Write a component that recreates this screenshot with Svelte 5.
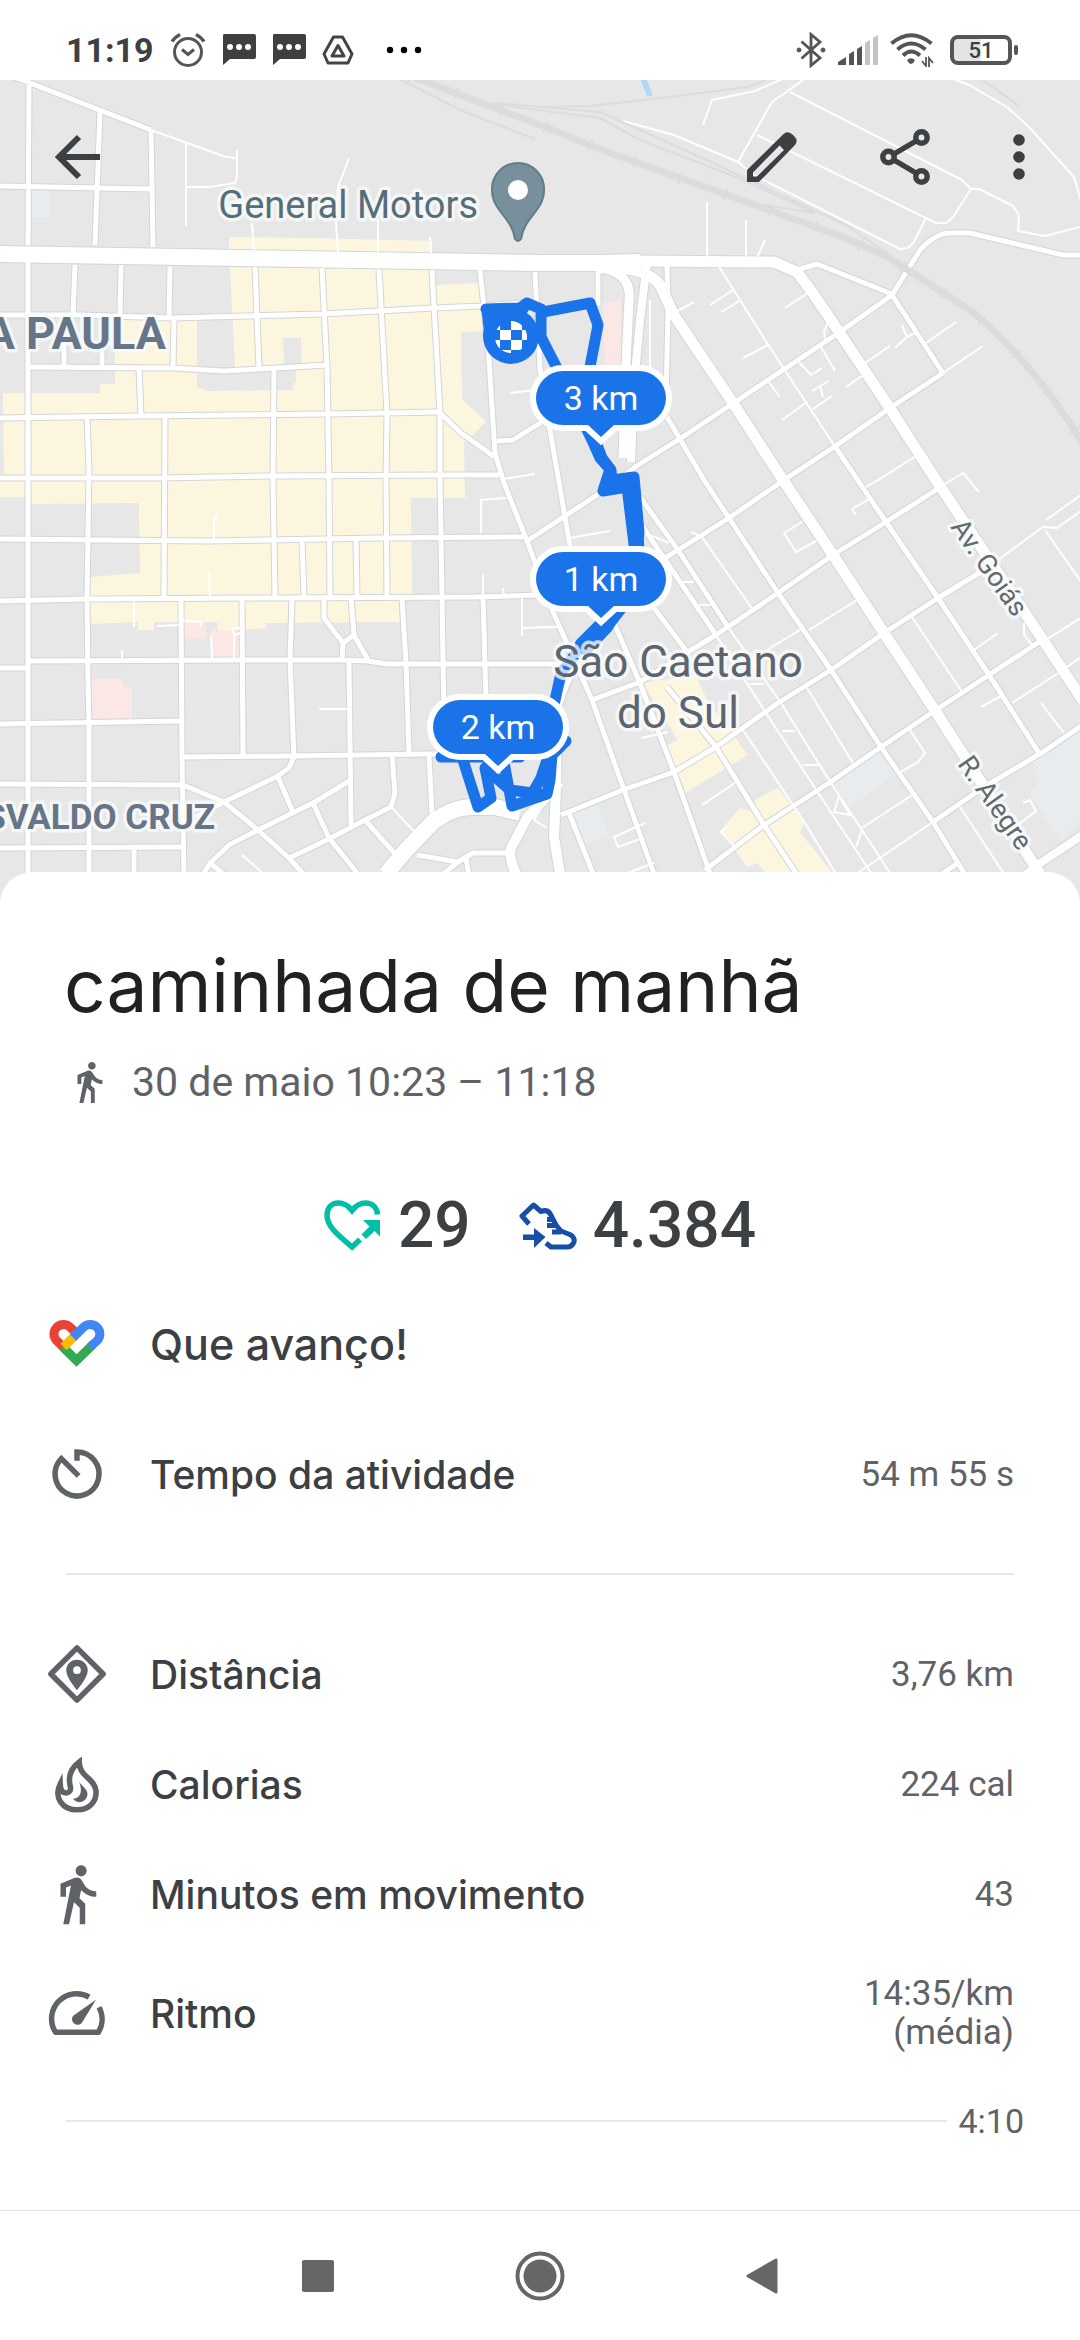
<script lang="ts">
	const wideRoads = [
		{ w: 16, d: 'M0 254 L540 263 L600 263 L640 262' },
		{ w: 11, d: 'M636 261 L774 262 L797 272 L812 292 L833 323 L891 410 L936 480 L1043 640 L1084 702' },
		{ w: 11, d: 'M600 268 Q645 266 660 285 L674 315 L733 403 L781 477 L833 555 L884 633 L936 712 L1040 874' },
		{ w: 8, d: 'M647 263 L640 320 L634 385 L631 462' },
		{ w: 9, d: 'M606 269 Q632 276 629 300 L626 363 L623 458' },
		{ w: 16, d: 'M386 874 L406 850 L434 821 Q452 808 470 807 L495 807 L520 813' },
		{ w: 10, d: 'M557 700 L556 790 L554 837 L561 880 M560 782 L527 818 L511 848 Q508 857 517 876' },
		{ w: 8, d: 'M1084 834 L1036 866 L1024 876' }
	];

	const roads = [
		'M12 76 L151 130',
		'M29 85 L28 245 M100 112 L95 245 M151 130 L153 247',
		'M0 186 L152 189',
		'M28 262 L28 876',
		'M75 265 L73 315 M121 265 L120 315 M170 267 L169 318 M174 320 L173 367',
		'M0 315 L80 315 L172 318 L322 314 L434 308 L482 306 L535 302',
		'M28 367 L172 368 L224 371 L327 365',
		'M64 340 V367 M102 340 V367 M139 370 L141 415',
		'M255 267 L259 367 M322 268 L327 367 L329 480 L330 597',
		'M379 270 L387 413 L386 480 L387 597',
		'M432 270 L440 413 L440 480 L442 597 L444 720',
		'M480 270 L484 307 L489 360 L495 453 L504 483 L527 541 L553 612 L592 700 L623 787 L654 874',
		'M440 413 L461 433 L485 450 L494 457 M497 441 L513 440 L545 420',
		'M0 418 L141 416 L327 414 L440 412',
		'M0 478 L160 478 L275 476 L440 475 L499 475',
		'M0 539 L207 541 L379 538 L523 537',
		'M0 601 L86 599 L275 598 L475 597 L540 595',
		'M29 661 L241 660 L341 660 L368 661 L387 664 L565 664',
		'M0 668 H29 M0 724 L181 721 M0 848 L185 847 M134 848 V876',
		'M0 784 L183 785 L224 802 L258 830 L289 858 L305 876',
		'M183 757 L293 756 L427 754 L460 754',
		'M274 370 L273 480 L275 597 M87 418 L89 470 L87 597 L88 683 L89 723 L89 876 M165 417 L164 597',
		'M181 600 L182 757 L184 876 M242 600 L243 755 M292 600 L290 660 L294 757 L289 768 L276 777 L224 802 L196 817',
		'M302 540 L304 597 M356 540 L357 597 M324 600 V618 L343 643 L342 660 M351 598 L354 635 L343 643 M354 635 L368 660',
		'M402 598 L406 663 L409 753 M483 597 L486 700 L475 712 M349 662 L351 825',
		'M392 755 L395 793 L391 807 L365 820 L327 840 L289 858 M429 755 L432 813',
		'M351 780 L313 803 L258 830 L229 845 L210 863 L202 876 M278 777 L293 812 M313 803 L329 838 L358 874 M365 820 L396 855 M210 863 L226 876',
		'M417 855 L458 862 L473 853 L507 853 M458 862 L443 874 M466 858 L469 876',
		'M892 295 L840 332 L735 402 L678 440 L638 465 L600 493 L527 541',
		'M943 373 L890 408 L834 447 L784 480 L729 518 L678 550 L655 564',
		'M939 488 L886 522 L833 555 L778 593 L716 635 L688 652 L640 682 L592 700',
		'M984 570 L938 598 L884 633 L831 670 L778 703 L716 747 L674 772 L623 790 L561 815',
		'M1039 642 L989 675 L936 710 L881 747 L829 783 L764 825 L705 870',
		'M1084 724 L1043 752 L984 787 L933 822',
		'M958 863 L942 874',
		'M892 295 L943 373',
		'M834 445 L886 522 L938 598 L989 675 L1039 753',
		'M667 417 L704 480 L729 518 L778 593 L831 670 L881 747 L933 822 L966 876',
		'M640 497 L678 550 L728 627 M643 527 L716 635',
		'M667 687 L716 747 L764 825 L798 876 M654 608 L688 653',
		'M614 623 L640 683 L674 772 L711 876 M569 813 L594 876',
		'M667 265 L668 310 L666 400 M598 270 V305',
		'M535 272 L538 330 L540 369 L550 430 L570 546 M614 620 Q570 664 560 705',
		'M892 295 L920 250 Q936 233 950 233 L970 233 L1063 255 L1084 255 M797 270 L817 264 L892 294'
	];

	const lanes = [
		'M151 130 L226 157 L237 158 M186 143 V226 M186 187 L210 187 L235 183 L237 177 V150',
		'M349 158 L338 187 L336 223 L338 252 M252 223 L254 250 M378 220 V252 M430 237 L431 253',
		'M623 121 L674 135 L738 162 L754 175 L900 249 L908 248 L914 242 L926 218',
		'M738 162 L772 102 L806 78 M790 92 L962 180 L971 189 L953 217 L946 223 L936 223 L757 135',
		'M971 189 H979 L1013 206 L1019 215 L1018 231 L1045 236 L1084 226',
		'M950 78 L969 85 L1007 107 L1029 127 L1074 177 L1082 204 M703 125 L712 100 L755 91 L785 78',
		'M707 202 V257 M746 220 V257 M765 240 L757 258 M718 265 L767 343 L834 445',
		'M674 313 L694 302 M710 305 L733 290 M721 312 L741 300 M785 308 L808 293 M743 358 L768 345',
		'M865 363 L890 346 M926 343 L956 322 M943 373 L983 346 M846 387 L862 376 M768 381 L780 397',
		'M799 362 L811 375 L822 368 M821 347 L835 371 M782 420 L807 402 M813 409 L832 396 M812 391 L829 381 M820 386 L823 397',
		'M902 325 L907 337 L895 348 M907 337 L915 333 M828 322 L824 332 L826 343 M878 480 L916 456',
		'M940 487 L963 473 L979 492 M866 487 L895 470 M856 515 L852 509 L869 499',
		'M802 522 L784 533 L796 552 L816 541 M691 532 L702 537 L753 610 M643 532 L669 543',
		'M682 582 H694 M699 605 H711 M750 684 H764 M782 731 H795 M803 765 H818',
		'M728 627 L781 703 L829 780 L862 830 L892 876 M716 635 L766 713 L815 788 L873 876',
		'M809 630 L857 600 M767 650 L803 628 M912 617 L962 692 M974 650 L998 633',
		'M1024 623 V635 L1032 645 M981 707 L1001 696 M1012 703 L1060 672 L1084 655 M1041 643 L1084 616',
		'M998 560 L1043 527 L1057 528 L1084 509 M1046 520 L1084 493 M1045 530 L1084 586 M1041 703 L1064 733',
		'M910 730 L925 753 L918 762 L899 773 M807 688 L853 763 M743 730 L805 823 L836 874',
		'M839 796 L834 812 L850 815 L839 796 M862 830 L856 847 M862 828 L912 795 M933 822 L856 874',
		'M702 805 L735 783 M960 807 L1004 874 M1015 827 L1036 811 L1030 800 L1023 803',
		'M645 823 L614 837 L618 847 L643 838 M641 738 L668 732 M728 826 L721 832 L735 847 M654 863 L625 874',
		'M540 627 H557 M570 538 L610 531 M510 393 L535 390 M481 533 V500 L506 498 M503 479 L535 474',
		'M522 597 V636 M522 628 L556 627 M483 575 V597 M503 588 L504 597',
		'M214 540 V520 L218 513 M209 572 L210 597 M134 600 V627 M157 626 L180 625 M182 621 L201 622 V627',
		'M211 635 L212 658 M241 628 H232 L234 635 V658 M234 635 L241 633 M122 650 V660',
		'M242 855 L264 874 M391 807 L414 831 M319 709 H348 M540 810 L534 820 L547 828 M650 388 V300'
	];

	const rails = [
		'M398 78 L460 110 L535 139',
		'M540 107 L590 106 L670 97 L747 87 L772 78',
		'M410 78 L490 104 L600 118 L640 140 L736 177 L815 213 M495 103 L600 112 L700 157 L846 225 L890 255',
		'M980 78 L1019 106 M745 202 L815 213'
	];

	const mainRail = 'M410 76 L540 125 L602 150 L747 202 L843 237 L888 257 L974 313 Q1040 370 1084 446';

	const blocks = [
		'M229 237 L308 238 L432 241 V253 L229 250 Z',
		'M230 267 L436 270 V285 L480 283 L484 331 L461 332 L462 399 L486 422 L464 443 L465 498 L411 498 L412 597 L400 600 V622 L266 623 V628 L218 632 L217 622 L154 622 V630 H138 V622 L90 624 V577 L140 573 L139 503 L32 504 L31 497 H0 V480 H4 L3 393 H100 V384 H115 V320 H197 V387 L207 391 L293 390 V383 H296 V367 H235 Z',
		'M643 683 L695 675 L709 703 L748 755 L685 793 L661 748 L678 740 L667 723 Z',
		'M755 800 L778 788 L805 823 L800 832 L833 874 H767 L757 863 L747 867 L721 830 L740 808 L754 812 Z'
	];

	const places = [
		{ x: 601, y: 398, text: '3 km' },
		{ x: 601, y: 579, text: '1 km' },
		{ x: 498, y: 727, text: '2 km' }
	];

	const rows = [
		{ icon: 'distance', label: 'Distância', value: '3,76 km' },
		{ icon: 'fire', label: 'Calorias', value: '224 cal' },
		{ icon: 'walk', label: 'Minutos em movimento', value: '43' },
		{ icon: 'speed', label: 'Ritmo', value: '14:35/km (média)' }
	];
</script>

{#snippet icon(name: string)}
	<svg class="icon" viewBox="0 0 24 24" aria-hidden="true">
		{#if name === 'walk'}
			<path
				fill="currentColor"
				d="M13.5 5.5c1.1 0 2-.9 2-2s-.9-2-2-2-2 .9-2 2 .9 2 2 2zM9.8 8.9 7 23h2.1l1.8-8 2.1 2v6h2v-7.5l-2.1-2 .6-3C14.8 12 16.8 13 19 13v-2c-1.9 0-3.5-1-4.3-2.4l-1-1.6c-.4-.6-1-1-1.7-1-.3 0-.5.1-.8.1L6 8.3V13h2V9.6l1.8-.7"
			/>
		{:else if name === 'timer'}
			<path class="line" d="M12 7.2V4A8 8 0 1 1 6.3 6.4L12.6 12.7" />
		{:else if name === 'distance'}
			<path class="line" stroke-linejoin="round" d="M12 2.5 21.5 12 12 21.5 2.5 12Z" />
			<path
				fill="currentColor"
				fill-rule="evenodd"
				d="M12 6.8c-2.2 0-3.9 1.7-3.9 3.8 0 2.8 3.9 7.2 3.9 7.2s3.9-4.4 3.9-7.2c0-2.1-1.7-3.8-3.9-3.8zm0 2.4a1.4 1.4 0 1 1 0 2.8 1.4 1.4 0 0 1 0-2.8z"
			/>
		{:else if name === 'fire'}
			<path
				class="line"
				d="M12.8 4C9.6 6.4 8.7 9.6 9.6 13c.3 1.3-.5 2.3-1.6 2.3-1.3 0-2-1.2-2.1-3.3C3.4 17 6.8 21.4 12 21.4c4.7 0 7.3-3.3 6.9-7C18.4 9.8 12.8 9.4 12.8 4z"
			/>
			<path
				fill="currentColor"
				d="M12.6 10.5c.4 2 3.3 2.8 3.2 5.3-.1 1.8-1.6 2.8-3 2.8-1.1 0-1.8-.5-2.2-1.2 2.8-.4 3.6-2.6 2-6.9z"
			/>
		{:else if name === 'speed'}
			<path class="line" stroke-linejoin="round" d="M16.4 6.2A9.1 9.1 0 0 0 4.2 19H19.8A9.1 9.1 0 0 0 20 9.9" />
			<path fill="currentColor" d="M18.9 7.2 13.8 15.5a2 2 0 1 1-3.2-2.5z" />
		{/if}
	</svg>
{/snippet}

{#snippet chat()}
	<svg width="34" height="32" viewBox="0 0 34 32" aria-hidden="true">
		<path fill="#3f3f3f" d="M2 0h30q2 0 2 2v21q0 2-2 2H8l-7 6V2q0-2 1-2z" />
		<circle cx="8" cy="13" r="3" fill="#fff" />
		<circle cx="17" cy="13" r="3" fill="#fff" />
		<circle cx="26" cy="13" r="3" fill="#fff" />
	</svg>
{/snippet}

<div class="screen">
	<header class="status">
		<div class="status-side">
			<time>11:19</time>
			<svg width="36" height="36" viewBox="0 0 36 36" fill="none" stroke="#555" stroke-width="3" aria-hidden="true">
				<circle cx="18" cy="20" r="13.5" />
				<path d="M12 17.5l6 5 6-5" />
				<path stroke-width="3.5" d="M2 9.5Q5 5 10 2.5M34 9.5Q31 5 26 2.5" />
			</svg>
			{@render chat()}
			{@render chat()}
			<svg width="32" height="32" viewBox="0 0 32 32" fill="none" stroke="#444" stroke-width="3" stroke-linejoin="round" aria-hidden="true">
				<path d="M11.5 3h9L30 20l-4 9H6L2 20z" />
				<path d="M16 11.5L22 22H10z" />
			</svg>
			<svg class="more-notes" width="36" height="8" viewBox="0 0 36 8" aria-hidden="true">
				<circle cx="4" cy="4" r="3.2" />
				<circle cx="18" cy="4" r="3.2" />
				<circle cx="32" cy="4" r="3.2" />
			</svg>
		</div>
		<div class="status-side right">
			<svg width="30" height="36" viewBox="0 0 30 36" fill="none" stroke="#555" stroke-width="2.8" aria-hidden="true">
				<path d="M5.5 9.5L24 26 15 33.5V2.5L24 10 5.5 26.5" />
				<circle cx="3" cy="18" r="2" fill="#555" stroke-width="1" />
				<circle cx="27" cy="18" r="2" fill="#555" stroke-width="1" />
			</svg>
			<svg width="40" height="30" viewBox="0 0 40 30" aria-hidden="true">
				<path fill="#555" d="M0 30v-3l8-5v8zM11 30V19l5-3v14zM19 30V14l5-3v19z" />
				<path fill="#c4c4c4" d="M27 30V8l5-3v25zM35 30V3l5-3v30z" />
			</svg>
			<svg width="44" height="34" viewBox="0 0 44 34" fill="none" stroke="#555" stroke-width="4" aria-hidden="true">
				<path d="M1.5 10.5Q21 -6 41.5 10.5M7.5 16.5Q21 4.5 35.5 16.5M13 22.5Q21 14.5 30 22.5" />
				<path fill="#555" stroke="none" d="M17 27q4-3.5 8 0-1 3-4 4-3-1-4-4z" />
				<path stroke-width="1.8" d="M32 28l4 5V24M43 30l-4-5v9" />
			</svg>
			<div class="battery"><span>51</span></div>
		</div>
	</header>

	<section class="map">
		<svg class="map-canvas" viewBox="0 80 1080 824" preserveAspectRatio="xMidYMin slice" role="img" aria-label="Mapa do percurso">
			<rect y="80" width="1080" height="824" fill="#e7e7e7" />

			<g fill="#fdf6df">
				{#each blocks as d}
					<path {d} />
				{/each}
			</g>
			<path fill="#e7e7e7" d="M283 338H301L302 366H284Z" />
			<path
				fill="#fbe8e6"
				d="M603 303L621 300V366H605ZM91 679H123V687H132V719H91ZM184 622H206V639H184ZM211 629L240 632V658H213Z"
			/>
			<path
				fill="#e8ecef"
				d="M31 190H50V217H31ZM833 783L881 750 898 772 850 807ZM1031 763L1080 730V820L1061 842 1029 793 1040 783ZM572 812L598 805 609 835 586 845Z"
			/>
			<path stroke="#aed9fb" stroke-width="6" d="M643 78L650 96" />

			<g class="casing">
				{#each roads as d}
					<path {d} stroke-width="7" />
				{/each}
				{#each wideRoads as road}
					<path d={road.d} stroke-width={road.w + 2} />
				{/each}
			</g>
			<g class="road">
				{#each lanes as d}
					<path {d} stroke-width="2" />
				{/each}
				{#each roads as d}
					<path {d} stroke-width="5" />
				{/each}
				{#each wideRoads as road}
					<path d={road.d} stroke-width={road.w} />
				{/each}
			</g>
			<g class="rail">
				{#each rails as d}
					<path {d} stroke-width="2" />
				{/each}
				<path d={mainRail} stroke-width="7" />
				<path d={mainRail} stroke-width="12" stroke-dasharray="2 46" />
			</g>

			<g class="route">
				<path d="M486 309 L520 308 L527 303 L541 309 V337 L559 372 L592 440 L600 458 L610 469 L603 491 L627 487 L634 544 L636 590 L613 619 L580 648 L561 673 L554 705" />
				<path d="M543 312 L590 303 L598 325 L589 372 M592 432 L602 458 L611 470 L612 480 L634 477 L639 532 L635 560 M625 600 L607 628 L586 650" />
				<path stroke-width="15" d="M633 492 L637 550 M603 624 L582 645" />
				<path d="M566 741 L552 755 L550 780 L547 794 L512 806 L504 762 M552 745 L541 778 L532 794 M441 757 H520 M463 760 L478 807 L491 798 L485 768 L510 790 L540 794" />
			</g>
			<path fill="#1a73e8" d="M481 306L532 306 520 322 484 332Z" />
			<circle cx="511" cy="336" r="28" fill="#1a73e8" />
			<clipPath id="finish"><circle cx="511" cy="337" r="16" /></clipPath>
			<path
				clip-path="url(#finish)"
				fill="#fff"
				d="M489 320h11v10h-11zM511 320h11v10h-11zM500 330h11v10h-11zM522 330h11v10h-11zM489 340h11v10h-11zM511 340h11v10h-11zM500 350h11v10h-11zM522 350h11v10h-11z"
			/>

			<path
				fill="#78909c"
				stroke="#607d8b"
				stroke-width="2"
				d="M518 163a26 26 0 0 0-26 27c0 21 20 27 23 49q3 4 6 0c3-22 23-28 23-49a26 26 0 0 0-26-27z"
			/>
			<circle cx="518" cy="190" r="10" fill="#fff" />

			<g class="label">
				<text class="poi" x="478" y="218" text-anchor="end">General Motors</text>
				<text class="district large" x="166" y="349" text-anchor="end">A PAULA</text>
				<text class="district" x="215" y="829" text-anchor="end">SVALDO CRUZ</text>
				<text class="city" x="678" y="677" text-anchor="middle">São Caetano</text>
				<text class="city" x="678" y="728" text-anchor="middle">do Sul</text>
				<text class="street" transform="translate(950 527) rotate(55)">Av. Goiás</text>
				<text class="street" transform="translate(957 764) rotate(55)">R. Alegre</text>
			</g>

			{#each places as place}
				<g class="marker" transform="translate({place.x} {place.y})">
					<path d="M-38 -27H38A27 27 0 0 1 38 27H13L0 39L-13 27H-38A27 27 0 0 1 -38 -27Z" />
					<text y="12" text-anchor="middle">{place.text}</text>
				</g>
			{/each}
		</svg>

		<nav class="toolbar">
			<button aria-label="Voltar">
				<svg width="48" height="48" viewBox="0 0 48 48" fill="none" stroke="currentColor" stroke-width="6" aria-hidden="true">
					<path d="M47 24H8M26 4L6 24l20 20" />
				</svg>
			</button>
			<div class="actions">
				<button aria-label="Editar">
					<svg width="50" height="50" viewBox="0 0 50 50" aria-hidden="true">
						<path
							fill="currentColor"
							fill-rule="evenodd"
							d="M0 38L36 2.5Q41 -2 46 3l1.5 1.5Q52 9 47 14L12 50H0zM6 40.5V44.5H10L37 18 32.5 13.5z"
						/>
					</svg>
				</button>
				<button aria-label="Compartilhar">
					<svg width="50" height="56" viewBox="0 0 50 56" fill="none" stroke="currentColor" stroke-width="5.5" aria-hidden="true">
						<path d="M14 25L36 12M14 31L36 44" />
						<circle cx="8.5" cy="28" r="5.7" />
						<circle cx="41.5" cy="8.5" r="5.7" />
						<circle cx="41.5" cy="47.5" r="5.7" />
					</svg>
				</button>
				<button aria-label="Mais opções">
					<svg width="12" height="48" viewBox="0 0 12 48" fill="currentColor" aria-hidden="true">
						<circle cx="6" cy="7" r="5.8" />
						<circle cx="6" cy="24" r="5.8" />
						<circle cx="6" cy="41" r="5.8" />
					</svg>
				</button>
			</div>
		</nav>
	</section>

	<main class="sheet">
		<h1>caminhada de manhã</h1>
		<p class="when">
			{@render icon('walk')}
			<span>30 de maio 10:23 – 11:18</span>
		</p>

		<div class="metrics">
			<div class="metric">
				<svg width="58" height="52" viewBox="0 0 58 52" aria-hidden="true">
					<path
						fill="none"
						stroke="#00bfa5"
						stroke-width="5.5"
						d="M53.5 14.5C53 7 48 3 41.5 3 36 3 31.5 6 28 10.5 24.5 6 20 3 14.5 3 7.5 3 3 8 3 15.5c0 10 8.5 17.5 25 31.5l8-7.5"
					/>
					<path fill="#00bfa5" d="M39 20H56V36.5L50.5 31 42 39 37.5 34.5 45.5 26.5z" />
				</svg>
				<span>29</span>
			</div>
			<div class="metric">
				<svg width="58" height="52" viewBox="0 -2 58 52" aria-hidden="true">
					<path
						fill="none"
						stroke="#174ea6"
						stroke-width="5"
						stroke-linejoin="round"
						d="M10 22L3 14 14.5 3 22 9.5Q28 7 31 11.5L37 23 42 29 52 33Q56 36 55 40 53 45 48 45H32L27 41M28 17.5H35M28 23.5H38M33 30H42"
					/>
					<path fill="#174ea6" d="M4 32.5H15V26L26.5 35 15 46V38H4z" />
				</svg>
				<span>4.384</span>
			</div>
		</div>

		<div class="row tall praise">
			<svg class="icon" viewBox="-5 -9 66 66" fill="none" stroke-width="9" aria-hidden="true">
				<path stroke="#ea4335" d="M15 27.8L7.8 20.8A9.5 9.5 0 0 1 21.2 7.2L29 15" />
				<path stroke="#34a853" d="M14 27.2L27.5 40.5 44 24.5" />
				<path stroke="#fbbc04" d="M27 14.5L14.5 27" />
				<path stroke="#4285f4" d="M41 27L48 20.8A9.5 9.5 0 0 0 34.5 7.2L24 17.5" />
			</svg>
			<span class="name">Que avanço!</span>
		</div>
		<div class="row tall">
			{@render icon('timer')}
			<span class="name">Tempo da atividade</span>
			<span class="value">54 m 55 s</span>
		</div>

		<hr />

		<ul>
			{#each rows as row}
				<li class="row">
					{@render icon(row.icon)}
					<span class="name">{row.label}</span>
					<span class="value">{row.value}</span>
				</li>
			{/each}
		</ul>

		<div class="axis">
			<span class="axis-line"></span>
			<span>4:10</span>
		</div>
	</main>

	<nav class="system">
		<button aria-label="Recentes">
			<svg width="32" height="32" viewBox="0 0 32 32" aria-hidden="true">
				<rect width="32" height="32" rx="2" fill="#666" />
			</svg>
		</button>
		<button aria-label="Início">
			<svg width="50" height="50" viewBox="0 0 50 50" aria-hidden="true">
				<circle cx="25" cy="25" r="22.5" fill="none" stroke="#666" stroke-width="4" />
				<circle cx="25" cy="25" r="16.5" fill="#666" />
			</svg>
		</button>
		<button aria-label="Voltar à tela anterior">
			<svg width="32" height="36" viewBox="0 0 32 36" aria-hidden="true">
				<path fill="#666" stroke="#666" stroke-width="3" stroke-linejoin="round" d="M2 18L30 2V34Z" />
			</svg>
		</button>
	</nav>
</div>

<style>
	:global(body) {
		background: #fff;
	}

	.screen {
		display: flex;
		flex-direction: column;
		min-height: 100vh;
		font-family: Roboto, 'Liberation Sans', sans-serif;
		color: #3c4043;
	}

	button {
		display: flex;
		align-items: center;
		justify-content: center;
		padding: 0;
		border: 0;
		background: none;
		color: inherit;
		cursor: pointer;
	}

	.status {
		display: flex;
		justify-content: space-between;
		box-sizing: border-box;
		height: 80px;
		padding: 20px 62px 0 66px;
	}

	.status-side {
		display: flex;
		align-items: center;
		gap: 16px;
	}

	.status-side.right {
		gap: 12px;
	}

	.status time {
		font-size: 34px;
		font-weight: 700;
	}

	.more-notes {
		margin-left: 16px;
	}

	.battery {
		position: relative;
		display: flex;
		align-items: center;
		justify-content: center;
		box-sizing: border-box;
		width: 62px;
		height: 30px;
		margin: 0 6px 0 4px;
		border: 4px solid #555;
		border-radius: 8px;
		background: linear-gradient(90deg, #e4e4e4 50%, #fff 50%);
		font-size: 22px;
		font-weight: 500;
	}

	.battery::after {
		content: '';
		position: absolute;
		right: -10px;
		width: 4px;
		height: 10px;
		border-radius: 2px;
		background: #555;
	}

	.map {
		position: relative;
	}

	.map-canvas {
		display: block;
		width: 100%;
	}

	.casing,
	.road,
	.rail,
	.route {
		fill: none;
		stroke-linejoin: round;
	}

	.casing {
		stroke: #d3d5d7;
	}

	.road {
		stroke: #fff;
	}

	.rail {
		stroke: #dadcde;
	}

	.route {
		stroke: #1a73e8;
		stroke-width: 11px;
		stroke-linecap: round;
	}

	.label {
		paint-order: stroke;
		stroke: rgba(250, 251, 252, 0.75);
		stroke-width: 7px;
		stroke-linejoin: round;
	}

	.poi {
		font-size: 38px;
		fill: #546e7a;
	}

	.district {
		font-size: 35px;
		font-weight: 700;
		fill: #667587;
	}

	.district.large {
		font-size: 45px;
	}

	.city {
		font-size: 44px;
		fill: #5c656f;
	}

	.street {
		font-size: 27px;
		fill: #5f6b70;
	}

	.marker path {
		fill: #1a73e8;
		stroke: #fff;
		stroke-width: 12px;
		paint-order: stroke;
	}

	.marker text {
		font-size: 34px;
		fill: #fff;
	}

	.toolbar {
		position: absolute;
		top: 0;
		left: 0;
		right: 0;
		display: flex;
		justify-content: space-between;
		align-items: center;
		height: 154px;
		padding: 0 55px 0 53px;
	}

	.actions {
		display: flex;
		align-items: center;
		gap: 83px;
	}

	.sheet {
		position: relative;
		flex: 1;
		margin-top: -32px;
		padding-top: 66px;
		border-radius: 32px 32px 0 0;
		background: #fff;
	}

	h1 {
		margin: 0 64px;
		font-family: Inter, Roboto, sans-serif;
		font-size: 73px;
		font-weight: 400;
		line-height: 96px;
		color: #202124;
	}

	.when {
		display: flex;
		align-items: center;
		gap: 20px;
		margin: 20px 66px 0;
		font-size: 41px;
		line-height: 56px;
		color: #5f6368;
	}

	.icon {
		flex: none;
		width: 66px;
		height: 66px;
		color: #5f6368;
	}

	.when .icon {
		width: 46px;
		height: 46px;
	}

	.line {
		fill: none;
		stroke: currentColor;
		stroke-width: 2;
	}

	.metrics {
		display: flex;
		justify-content: center;
		gap: 48px;
		margin-top: 76px;
	}

	.metric {
		display: flex;
		align-items: center;
		gap: 16px;
		font-size: 64px;
		font-weight: 500;
		line-height: 80px;
	}

	.row {
		display: flex;
		align-items: center;
		gap: 40px;
		min-height: 110px;
		padding: 0 66px 0 44px;
	}

	.row.tall {
		min-height: 130px;
	}

	.praise {
		margin-top: 13px;
	}

	.name {
		flex: 1;
		font-family: Inter, Roboto, sans-serif;
		font-size: 39px;
		font-weight: 500;
	}

	.praise .name {
		font-size: 43px;
	}

	.value {
		max-width: 160px;
		font-size: 35px;
		line-height: 39px;
		text-align: right;
		color: #5f6368;
	}

	hr {
		height: 2px;
		margin: 34px 66px 44px;
		border: 0;
		background: #e8e8ec;
	}

	ul {
		margin: 0;
		padding: 0;
		list-style: none;
	}

	.row:last-child {
		min-height: 128px;
	}

	.axis {
		display: flex;
		align-items: center;
		gap: 11px;
		min-height: 88px;
		padding: 0 56px 0 66px;
		font-size: 34px;
		color: #5f6368;
	}

	.axis-line {
		flex: 1;
		height: 2px;
		background: #e8e8ec;
	}

	.system {
		display: flex;
		justify-content: center;
		gap: 102px;
		height: 129px;
		border-top: 1px solid #e2e2e2;
	}

	.system button {
		width: 120px;
	}
</style>
